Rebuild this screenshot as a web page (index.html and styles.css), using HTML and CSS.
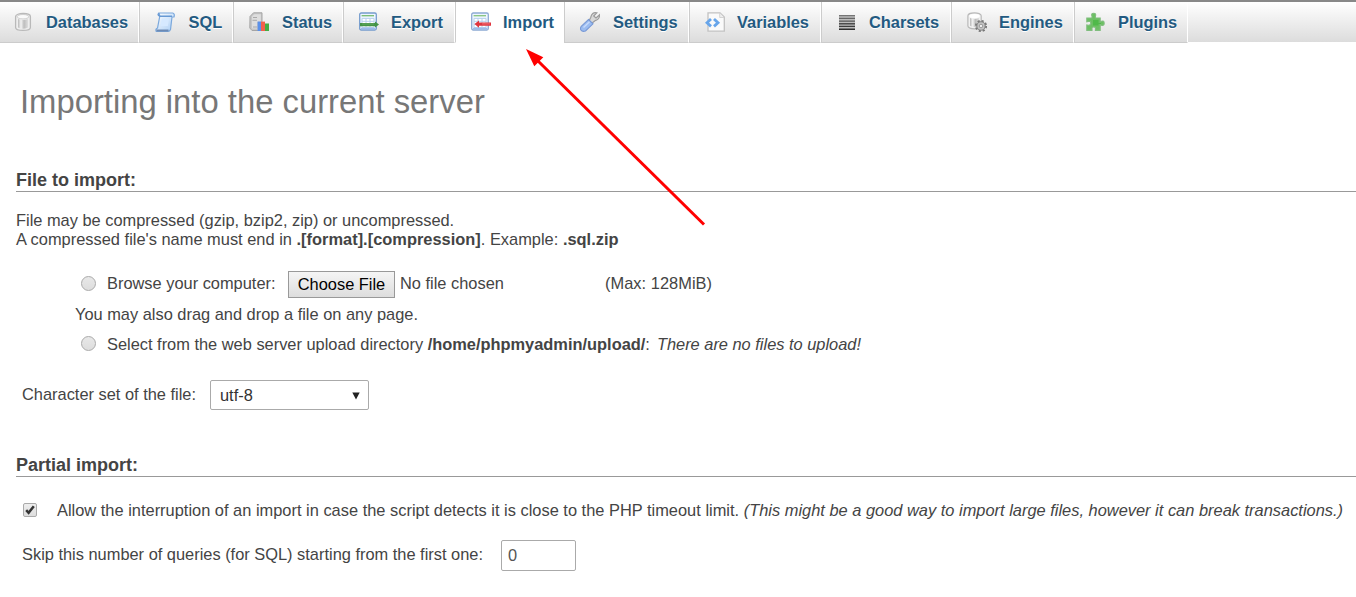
FILE: index.html
```html
<!DOCTYPE html>
<html lang="en">
<head>
<meta charset="utf-8">
<title>Import</title>
<link rel="stylesheet" href="styles.css">
</head>
<body>
<svg class="defs" width="0" height="0" aria-hidden="true">
  <defs>
    <linearGradient id="metal"><stop offset="0" stop-color="#b8b8b8"/><stop offset=".3" stop-color="#f4f4f4"/><stop offset=".6" stop-color="#bdbdbd"/><stop offset="1" stop-color="#dedede"/></linearGradient>
    <linearGradient id="paper" x2="1" y2="1"><stop offset="0" stop-color="#fff"/><stop offset="1" stop-color="#a9cdf5"/></linearGradient>
    <linearGradient id="dark" x2="0" y2="1"><stop offset="0" stop-color="#777"/><stop offset="1" stop-color="#2c2c2c"/></linearGradient>
  </defs>
</svg>
<nav class="tabs">
  <a class="tab tab-databases"><svg class="icon" viewBox="0 0 20 20"><path d="M2.6 4.5C2.6 .5 17.4 .5 17.4 4.5V15.5C17.4 19.4 2.6 19.4 2.6 15.5Z" fill="#eee" stroke="#b9b9b9" stroke-width="1.3"/><path d="M5 7V15.5Q10 18 15 15.5V7Q10 9 5 7Z" fill="url(#metal)"/><ellipse cx="10" cy="4.7" rx="5.8" ry="2.2" fill="#fafafa" stroke="#c8c8c8" stroke-width=".8"/></svg><span>Databases</span></a>
  <a class="tab tab-sql"><svg class="icon" viewBox="0 0 20 20"><path d="M4 1H17.5Q20 1.5 19 5H17L15.5 17.5Q14.8 19.3 13 19.3H1.2Q.2 17 2.5 16L4.8 4Z" fill="url(#paper)" stroke="#7ba8dc" stroke-width="1.2"/><path d="M3.8 1.2Q2 2.8 4.8 4.2H17" fill="none" stroke="#6799d4" stroke-width="1.4"/><path d="M1.4 17.4H13.5V19.4H1.6Z" fill="#6d8ab3"/><path d="M6.8 6.5H14L12.8 14H5.5Z" fill="#d6e9ff"/></svg><span>SQL</span></a>
  <a class="tab tab-status"><svg class="icon" viewBox="0 0 20 20"><path d="M1 4.5L4.5 .8H13V15L10 18.5H3L.8 16Z" fill="#c7c7c7" stroke="#a5a5a5" stroke-width="1"/><path d="M3 4.5L5.5 2.2H11.8V10H8V16.5H3Z" fill="#dedede"/><path d="M4 5.5H8M3.5 8.3H8M4 15H8" stroke="#aaa"/><path d="M8.6 9.5H12V19H8.6Z" fill="#5b91ea"/><path d="M12 9.6H16V19H12Z" fill="#f2604a"/><path d="M16 11.5H20V19H16Z" fill="#43ad43"/></svg><span>Status</span></a>
  <a class="tab tab-export"><svg class="icon" viewBox="0 0 20 20"><rect x=".7" y="1" width="16.6" height="17" rx="1.5" fill="#eef6ff" stroke="#769ccd" stroke-width="1.3"/><path d="M2.6 3.7H15" stroke="#75bb70" stroke-width="1.3"/><path d="M3 6.4H15V15.5H3ZM3 9.3H15M3 12.3H15M7 6.4V15.5M11 6.4V15.5" fill="#fff" stroke="#b7d0ed" stroke-width="1"/><path d="M2 16.6H16.5" stroke="#9cbbea" stroke-width="1.6"/><path d="M1 10.9H16V9.5L20 12.5L16 15.5V14.2H1Z" fill="#449447"/><path d="M3 12H15" stroke="#6eae68" stroke-width=".8"/></svg><span>Export</span></a>
  <a class="tab tab-import active"><svg class="icon" viewBox="0 0 20 20"><rect x=".7" y="1" width="16.6" height="17" rx="1.5" fill="#eef6ff" stroke="#8daad3" stroke-width="1.3"/><path d="M2.6 3.7H15" stroke="#85c37d" stroke-width="1.3"/><path d="M3 6.4H15V15.5H3ZM3 9.3H15M3 12.3H15M7 6.4V15.5M11 6.4V15.5" fill="#fff" stroke="#b7d0ed" stroke-width="1"/><path d="M2 16.6H16.5" stroke="#9cbbea" stroke-width="1.6"/><path d="M3.5 12L8 8.5V10.5H20V13.7H8V15.8Z" fill="#e0353f"/><path d="M11 11.9H19" stroke="#f58088" stroke-width=".8"/></svg><span>Import</span></a>
  <a class="tab tab-settings"><svg class="icon" viewBox="0 0 20 20"><path d="M8.8 9.3L11.2 11.7L15 8.7Q19.7 7.5 19.6 2.7L16 6L13.7 4L16.8 .9Q11.8 -.2 10.8 5.2Z" fill="#d8d8d8" stroke="#9b9b9b" stroke-width="1.2"/><path d="M8.5 7.5L13 11.8L5.5 19Q2.3 20.2 .9 18Q-.2 16.2 1.5 14.2Z" fill="#9bbcf0" stroke="#7899d6" stroke-width="1.1"/><path d="M3.5 15.5L9.5 9.8" stroke="#c6dafb" stroke-width="1.5"/></svg><span>Settings</span></a>
  <a class="tab tab-variables"><svg class="icon" viewBox="0 0 20 20"><path d="M3 .8H15L19.3 5V19.2H3Z" fill="#fafafa" stroke="#c2c2c2" stroke-width="1.3"/><path d="M14.7 1V5.5H19" fill="#eee" stroke="#ccc" stroke-width=".8"/><path d="M6 7L2 10.7L6 14.4M9 7L13 10.7L9 14.4" fill="none" stroke="#67a5ea" stroke-width="2.8"/></svg><span>Variables</span></a>
  <a class="tab tab-charsets"><svg class="icon" viewBox="0 0 20 20"><path d="M2 3H18V18H2Z" fill="#bcbcbc"/><path d="M2 3H18V4.2H2ZM2 5.7H18V7H2ZM2 8.4H18V9.7H2ZM2 11.1H18V12.4H2ZM2 13.8H18V15.1H2ZM2 16.5H18V18H2Z" fill="url(#dark)"/></svg><span>Charsets</span></a>
  <a class="tab tab-engines"><svg class="icon" viewBox="0 0 20 20"><path d="M.9 3.8C.9 0 14.2 0 14.2 3.8V14C14.2 17.7 .9 17.7 .9 14Z" fill="#f1f1f1" stroke="#b9b9b9" stroke-width="1.2"/><path d="M3 6V13.8Q7 16 12 13.7V6Q7 8 3 6Z" fill="url(#metal)"/><ellipse cx="7.5" cy="3.9" rx="5.2" ry="2" fill="#fff"/><circle cx="14" cy="14" r="5.1" fill="none" stroke="#777" stroke-width="2" stroke-dasharray="2.1 1.9"/><circle cx="14" cy="14" r="4.2" fill="#c6c6c6" stroke="#808080" stroke-width="1.1"/><circle cx="14" cy="14" r="1.8" fill="#eee" stroke="#888" stroke-width=".8"/></svg><span>Engines</span></a>
  <a class="tab tab-plugins"><svg class="icon" viewBox="0 0 20 20"><path d="M.8 6H6V4.3Q4.8 1.3 7.6 1.3Q10.6 1.3 9.4 4.3V6H14.2V9.8L15.4 9.2Q18.2 8.4 18.2 11.2Q18.2 14 15.4 13.2L14.2 12.6V18.4H9.4V17Q9.9 15 7.7 15Q5.5 15 6 17V18.4H.8V13L2.3 13.2Q4.8 13.4 4.8 11.2Q4.8 9 2.3 9.4L.8 9.8Z" fill="#6cc063" stroke="#80bd7e" stroke-width="1.1"/><path d="M7 8H12.5V11H15V12H12.5V13.5H7Z" fill="#50b94a"/></svg><span>Plugins</span></a>
</nav>
<main class="page">
  <h2 class="title">Importing into the current server</h2>
  <section class="group">
    <h3 class="heading">File to import:</h3>
    <p class="intro">File may be compressed (gzip, bzip2, zip) or uncompressed.<br><span class="example">A compressed file's name must end in <b>.[format].[compression]</b>. Example: <b>.sql.zip</b></span></p>
    <div class="row browse"><input type="radio" class="radio"><label>Browse your computer:</label><button class="choose">Choose File</button><span class="chosen">No file chosen</span><span class="max">(Max: 128MiB)</span></div>
    <p class="row drag">You may also drag and drop a file on any page.</p>
    <div class="row select-dir"><input type="radio" class="radio"><label>Select from the web server upload directory <b>/home/phpmyadmin/upload/</b>:<i class="empty">There are no files to upload!</i></label></div>
    <div class="row charset"><label>Character set of the file:</label><div class="dropdown"><span>utf-8</span><svg width="8" height="8" viewBox="0 0 8 8"><path d="M.3 .5H7.7L4 7.5Z" fill="#222"/></svg></div></div>
  </section>
  <section class="group partial">
    <h3 class="heading">Partial import:</h3>
    <div class="row allow"><span class="check"><svg width="12" height="12" viewBox="0 0 12 12"><path d="M2.2 6.2L4.6 8.8L9.8 2.2" fill="none" stroke="#333" stroke-width="2.5"/></svg></span><label>Allow the interruption of an import in case the script detects it is close to the PHP timeout limit. <i>(This might be a good way to import large files, however it can break transactions.)</i></label></div>
    <div class="row skip"><label>Skip this number of queries (for SQL) starting from the first one:</label><input class="number" type="text" value="0"></div>
  </section>
</main>
<svg class="arrow" width="190" height="190" viewBox="520 40 190 190"><path d="M537 60L704 224.5" stroke="#f00" stroke-width="3"/><path d="M526 49L543.3 57.3L534.3 66.3Z" fill="#f00"/></svg>
</body>
</html>
```
FILE: styles.css
```css
* { box-sizing: border-box; }
body {
  margin: 0;
  height: 597px;
  overflow: hidden;
  background: #fff;
  color: #444;
  font: 16.4px/19px "Liberation Sans", Arial, sans-serif;
}
.defs, .arrow { position: absolute; }
.arrow { left: 520px; top: 40px; }
h2, h3, p { margin: 0; }
.tabs {
  display: flex;
  height: 42px;
  border-top: 2px solid #888;
  background: linear-gradient(#fff, #dcdcdc);
}
.tab {
  display: flex;
  align-items: center;
  flex: none;
  gap: 12px;
  height: 41px;
  padding-left: 15px;
  border-left: 1px solid #ccc;
  border-right: 1px solid #fff;
  border-bottom: 1px solid #ccc;
  background: linear-gradient(#fff, #dcdcdc);
  color: #235a81;
  font-weight: bold;
  white-space: nowrap;
  text-shadow: 0 1px 0 #fff;
}
.icon { width: 20px; height: 20px; flex: none; }
.tab-databases { width: 139px; gap: 13px; padding-left: 13px; border-left: 0; }
.tab-sql { width: 94px; gap: 13.5px; }
.tab-status { width: 110px; gap: 13px; }
.tab-export { width: 112px; }
.tab-import { width: 109px; }
.tab-settings { width: 125px; gap: 13px; }
.tab-variables { width: 132px; }
.tab-charsets { width: 130px; }
.tab-engines { width: 123px; }
.tab-plugins { width: 114px; padding-left: 11px; }
.tab.active { background: #fff; border-bottom-color: #fff; }
.page { padding-left: 16px; }
.title {
  padding: 40px 0 0 4px;
  color: #777;
  font-size: 32.8px;
  font-weight: normal;
  line-height: 40px;
}
.group { padding-top: 48px; }
.heading {
  height: 22px;
  border-bottom: 1px solid #999;
  font-size: 18px;
  line-height: 20px;
}
.intro { padding-top: 19px; }
.example { letter-spacing: .012px; }
.row { display: flex; align-items: center; white-space: nowrap; }
.radio {
  appearance: none;
  width: 15px;
  height: 15px;
  margin: 0 11px 0 0;
  border: 1px solid #aaa;
  border-radius: 50%;
  background: linear-gradient(#e8e8e8, #ddd);
}
.browse { height: 27px; margin-top: 22px; padding-left: 65px; }
.browse .radio { margin-bottom: 2px; }
.browse label { width: 181px; padding-bottom: 2px; }
.choose {
  width: 107px;
  height: 27px;
  padding: 0;
  border: 1px solid #999;
  background: linear-gradient(#f5f5f5, #ddd);
  color: #000;
  font: inherit;
}
.chosen { width: 210px; padding: 0 0 2px 5px; }
.max { padding-bottom: 2px; letter-spacing: .04px; }
.drag { height: 20px; margin-top: 6px; padding-left: 59px; }
.select-dir { height: 20px; margin-top: 10px; padding-left: 65px; }
.select-dir .radio { margin-bottom: 2px; }
.empty { padding-left: 7px; }
.charset { height: 30px; margin-top: 26px; padding-left: 6px; }
.charset label { width: 188px; padding-bottom: 2px; }
.dropdown {
  display: flex;
  align-items: center;
  justify-content: space-between;
  width: 159px;
  height: 30px;
  padding: 1px 8px 0 9px;
  border: 1px solid #aaa;
  border-radius: 2px;
  color: #333;
}
.partial { padding-top: 45px; }
.allow { height: 20px; margin-top: 23px; padding-left: 7px; }
.allow label { letter-spacing: .01px; }
.check {
  display: flex;
  width: 14px;
  height: 14px;
  margin-right: 20px;
  border: 1px solid #aaa;
  border-radius: 2px;
  background: linear-gradient(#eee, #ddd);
}
.skip { height: 31px; margin-top: 20px; padding-left: 6px; }
.skip label { width: 479px; padding-bottom: 2px; }
.number {
  width: 75px;
  height: 31px;
  padding: 0 6px;
  border: 1px solid #aaa;
  border-radius: 2px;
  color: #555;
  font: inherit;
}
```
